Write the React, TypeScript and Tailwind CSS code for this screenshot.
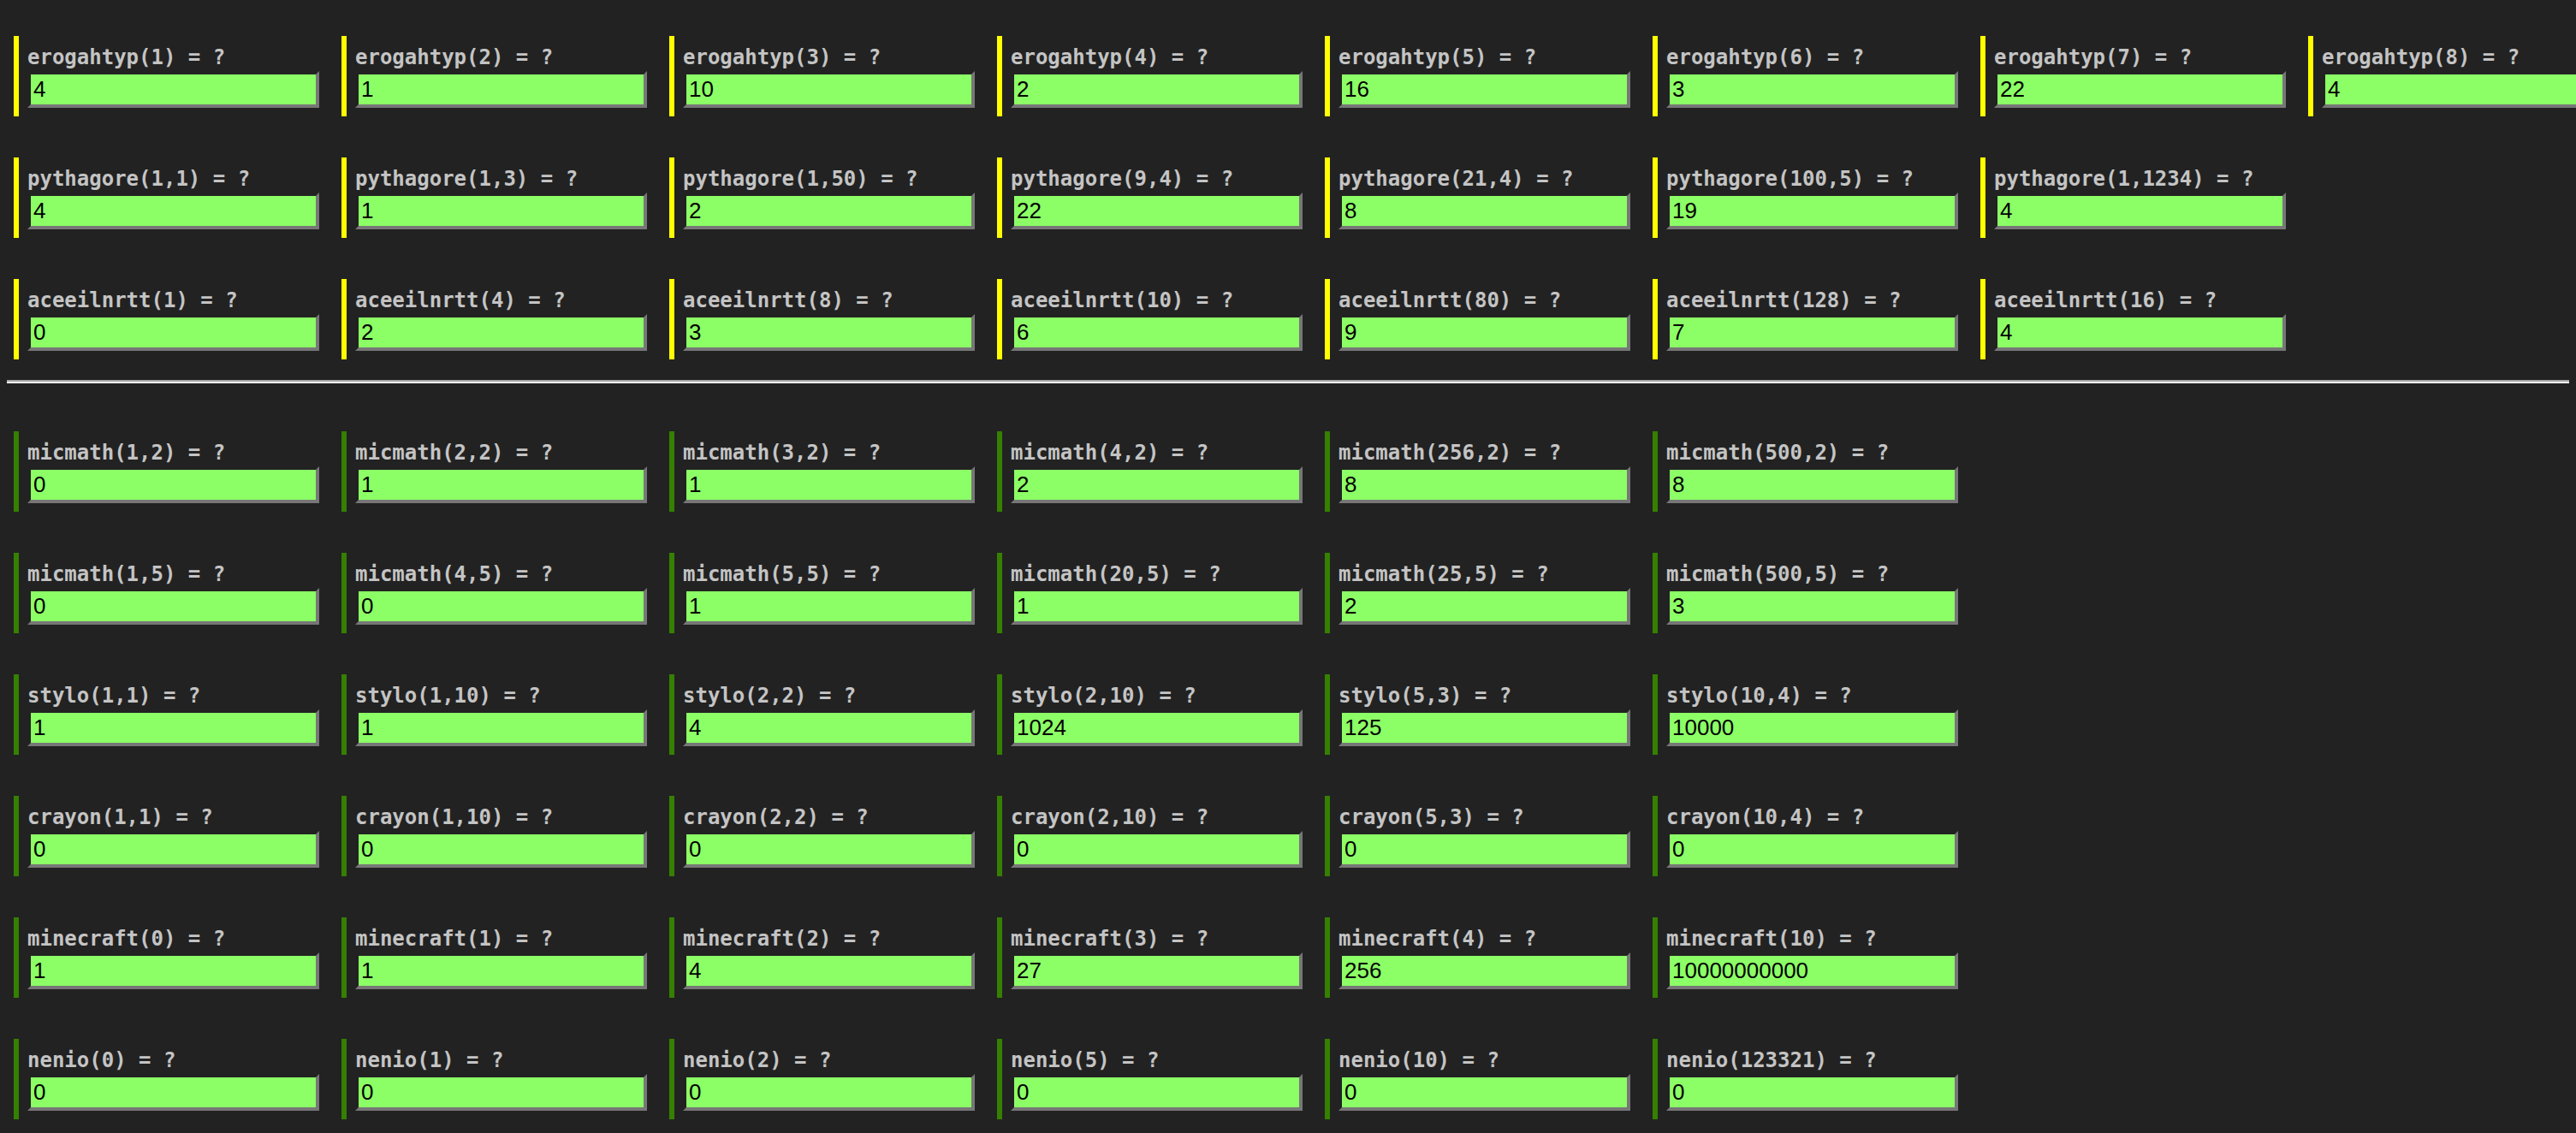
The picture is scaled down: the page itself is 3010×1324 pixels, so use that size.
import React from "react";

type Item = [string, string];

const top: Item[][] = [
  [
    ["erogahtyp(1) = ?", "4"],
    ["erogahtyp(2) = ?", "1"],
    ["erogahtyp(3) = ?", "10"],
    ["erogahtyp(4) = ?", "2"],
    ["erogahtyp(5) = ?", "16"],
    ["erogahtyp(6) = ?", "3"],
    ["erogahtyp(7) = ?", "22"],
    ["erogahtyp(8) = ?", "4"],
  ],
  [
    ["pythagore(1,1) = ?", "4"],
    ["pythagore(1,3) = ?", "1"],
    ["pythagore(1,50) = ?", "2"],
    ["pythagore(9,4) = ?", "22"],
    ["pythagore(21,4) = ?", "8"],
    ["pythagore(100,5) = ?", "19"],
    ["pythagore(1,1234) = ?", "4"],
  ],
  [
    ["aceeilnrtt(1) = ?", "0"],
    ["aceeilnrtt(4) = ?", "2"],
    ["aceeilnrtt(8) = ?", "3"],
    ["aceeilnrtt(10) = ?", "6"],
    ["aceeilnrtt(80) = ?", "9"],
    ["aceeilnrtt(128) = ?", "7"],
    ["aceeilnrtt(16) = ?", "4"],
  ],
];

const bottom: Item[][] = [
  [
    ["micmath(1,2) = ?", "0"],
    ["micmath(2,2) = ?", "1"],
    ["micmath(3,2) = ?", "1"],
    ["micmath(4,2) = ?", "2"],
    ["micmath(256,2) = ?", "8"],
    ["micmath(500,2) = ?", "8"],
  ],
  [
    ["micmath(1,5) = ?", "0"],
    ["micmath(4,5) = ?", "0"],
    ["micmath(5,5) = ?", "1"],
    ["micmath(20,5) = ?", "1"],
    ["micmath(25,5) = ?", "2"],
    ["micmath(500,5) = ?", "3"],
  ],
  [
    ["stylo(1,1) = ?", "1"],
    ["stylo(1,10) = ?", "1"],
    ["stylo(2,2) = ?", "4"],
    ["stylo(2,10) = ?", "1024"],
    ["stylo(5,3) = ?", "125"],
    ["stylo(10,4) = ?", "10000"],
  ],
  [
    ["crayon(1,1) = ?", "0"],
    ["crayon(1,10) = ?", "0"],
    ["crayon(2,2) = ?", "0"],
    ["crayon(2,10) = ?", "0"],
    ["crayon(5,3) = ?", "0"],
    ["crayon(10,4) = ?", "0"],
  ],
  [
    ["minecraft(0) = ?", "1"],
    ["minecraft(1) = ?", "1"],
    ["minecraft(2) = ?", "4"],
    ["minecraft(3) = ?", "27"],
    ["minecraft(4) = ?", "256"],
    ["minecraft(10) = ?", "10000000000"],
  ],
  [
    ["nenio(0) = ?", "0"],
    ["nenio(1) = ?", "0"],
    ["nenio(2) = ?", "0"],
    ["nenio(5) = ?", "0"],
    ["nenio(10) = ?", "0"],
    ["nenio(123321) = ?", "0"],
  ],
];

function Card({ label, value, yellow }: { label: string; value: string; yellow: boolean }) {
  return (
    <div
      className={
        yellow
          ? "w-[383px] shrink-0 border-l-[6px] border-[#ffff00] pl-[10px] py-[10px] flex flex-col"
          : "w-[383px] shrink-0 border-l-[6px] border-[#358000] pl-[10px] py-[10px] flex flex-col"
      }
    >
      <div className="h-[31px] leading-[31px] text-[24px] font-bold text-[#c4c4c4] whitespace-pre font-['DejaVu_Sans_Mono',monospace]">
        {label}
      </div>
      <input
        readOnly
        value={value}
        className="h-[43px] w-[341px] border-[4px] border-t-[#222222] border-l-[#222222] border-r-[#777777] border-b-[#777777] bg-[#8cff66] px-[3px] text-[26px] text-black outline-none font-['Liberation_Sans',Arial,sans-serif]"
      />
    </div>
  );
}

function Row({ items, yellow }: { items: Item[]; yellow: boolean }) {
  return (
    <div className="flex pl-[16px]">
      {items.map(([l, v]) => (
        <Card key={l} label={l} value={v} yellow={yellow} />
      ))}
    </div>
  );
}

export default function App() {
  return (
    <div className="w-[3010px] h-[1324px] overflow-hidden bg-[#222222] pt-[42px]">
      <div className="flex flex-col gap-[48px]">
        {top.map((r, i) => (
          <Row key={i} items={r} yellow />
        ))}
      </div>
      <div className="mx-[8px] mt-[24px] mb-[56px] h-[4px] border-t-[2px] border-t-[#a8a8a8] border-b-[2px] border-b-[#eeeeee]" />
      <div className="flex flex-col gap-[48px]">
        {bottom.map((r, i) => (
          <Row key={i} items={r} yellow={false} />
        ))}
      </div>
    </div>
  );
}
